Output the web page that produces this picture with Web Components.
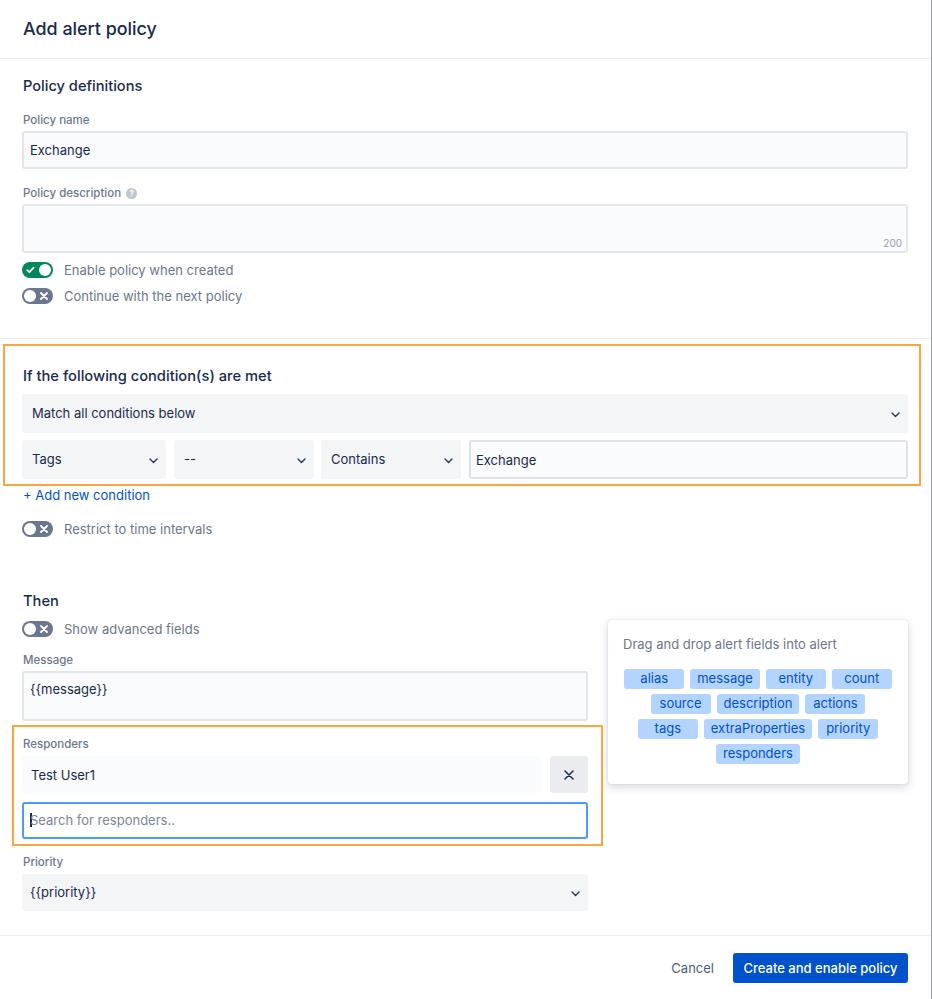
<!DOCTYPE html>
<html>
<head>
<meta charset="utf-8">
<title>Add alert policy</title>
<style>
  html, body { margin: 0; padding: 0; background: #fff; }
  body { font-family: Inter, "Liberation Sans", sans-serif; color: #172b4d; }
</style>
</head>
<body>
<policy-page>
  <page-header slot="header">Add alert policy</page-header>

  <form-section slot="first" title="Policy definitions">
    <text-field label="Policy name" value="Exchange"></text-field>
    <text-field label="Policy description" help height="49" counter="200"></text-field>
    <toggle-row checked>Enable policy when created</toggle-row>
    <toggle-row>Continue with the next policy</toggle-row>
  </form-section>

  <condition-block slot="conditions"></condition-block>

  <then-block slot="then"></then-block>

  <page-footer slot="footer"></page-footer>
</policy-page>

<script>
  const CHEVRON = `<svg width="9" height="6" viewBox="0 0 9 6" fill="none"><path d="M1 1 4.5 4.5 8 1" stroke="#253858" stroke-width="1.4" stroke-linecap="round" stroke-linejoin="round"/></svg>`;

  class PolicyPage extends HTMLElement {
    constructor() {
      super();
      const shadow = this.attachShadow({ mode: 'open' });
      shadow.innerHTML = `
        <style>
          :host { position: relative; display: block; box-sizing: border-box; width: 932px; height: 999px; overflow: hidden; border-right: 1px solid #9a9db0; background: #fff; }
          /* small dark mark sitting on the window edge */
          :host::after { content: ""; position: absolute; right: -1px; top: 229px; width: 1px; height: 6px; background: #4a5a70; }
          .body { padding: 0 23px 0 22px; }
        </style>
        <slot name="header"></slot>
        <slot name="first"></slot>
        <div class="body">
          <slot name="conditions"></slot>
          <slot name="then"></slot>
        </div>
        <slot name="footer"></slot>
      `;
    }
  }

  class PageHeader extends HTMLElement {
    constructor() {
      super();
      const shadow = this.attachShadow({ mode: 'open' });
      shadow.innerHTML = `
        <style>
          :host { display: flex; align-items: center; box-sizing: border-box; height: 59px; padding: 0 23px 2px; border-bottom: 1px solid #ebecf0; font-size: 17.9px; font-weight: 500; color: #172b4d; }
        </style>
        <slot></slot>
      `;
    }
  }

  class FormSection extends HTMLElement {
    constructor() {
      super();
      const shadow = this.attachShadow({ mode: 'open' });
      shadow.innerHTML = `
        <style>
          :host { display: block; box-sizing: border-box; height: 280px; padding: 17px 23px 0 22px; border-bottom: 1px solid #ebecf0; }
          h2 { margin: 0 0 0 1px; font-size: 14.6px; line-height: 20px; font-weight: 500; color: #172b4d; }
          ::slotted(toggle-row:nth-of-type(1)) { margin-top: 9px; }
          ::slotted(toggle-row) { margin-top: 10px; }
        </style>
        <h2></h2>
        <slot></slot>
      `;
      shadow.querySelector('h2').textContent = this.getAttribute('title');
    }
  }

  class TextField extends HTMLElement {
    constructor() {
      super();
      const shadow = this.attachShadow({ mode: 'open' });
      const h = this.getAttribute('height') || 38;
      shadow.innerHTML = `
        <style>
          :host { display: block; margin-top: 16px; }
          .label { display: flex; align-items: center; gap: 5px; margin-bottom: 3px; padding-left: 1px; font-size: 11.5px; line-height: 16px; font-weight: 500; color: #6b778c; }
          .help { display: inline-flex; align-items: center; justify-content: center; width: 11px; height: 11px; border-radius: 50%; background: #c1c7d0; color: #fff; font-size: 8px; line-height: 11px; font-weight: 700; }
          .box { position: relative; box-sizing: border-box; height: ${h}px; padding: 0 6px; border: 2px solid #e4e6ea; border-radius: 3px; background: #fafbfc; font-size: 13px; line-height: 35px; color: #172b4d; }
          .count { position: absolute; right: 4px; bottom: 1px; font-size: 10px; line-height: 14px; color: #97a0af; }
        </style>
        <div class="label"></div>
        <div class="box"></div>
      `;
      const label = shadow.querySelector('.label');
      label.textContent = this.getAttribute('label');
      if (this.hasAttribute('help')) {
        const help = document.createElement('span');
        help.className = 'help';
        help.textContent = '?';
        label.append(help);
      }
      const box = shadow.querySelector('.box');
      box.textContent = this.getAttribute('value') || '';
      if (this.hasAttribute('counter')) {
        const count = document.createElement('span');
        count.className = 'count';
        count.textContent = this.getAttribute('counter');
        box.append(count);
      }
    }
  }

  class ToggleRow extends HTMLElement {
    constructor() {
      super();
      const shadow = this.attachShadow({ mode: 'open' });
      const on = this.hasAttribute('checked');
      shadow.innerHTML = `
        <style>
          :host { display: flex; align-items: center; gap: 11px; height: 16px; font-size: 13px; color: #6b778c; }
          .track { position: relative; flex: none; width: 31px; height: 16px; border-radius: 8px; background: ${on ? '#00875a' : '#6b778c'}; }
          .knob { position: absolute; top: 2px; ${on ? 'right: 2px' : 'left: 2px'}; width: 12px; height: 12px; border-radius: 50%; background: #fff; }
          svg { position: absolute; top: 4px; ${on ? 'left: 4px' : 'right: 5px'}; }
        </style>
        <span class="track">
          <span class="knob"></span>
          ${on
            ? '<svg width="9" height="8" viewBox="0 0 9 8" fill="none"><path d="M1.2 4.2 3.4 6.2 7.6 1.6" stroke="#fff" stroke-width="1.8" stroke-linecap="round" stroke-linejoin="round"/></svg>'
            : '<svg width="8" height="8" viewBox="0 0 8 8" fill="none"><path d="M1 1 7 7M7 1 1 7" stroke="#fff" stroke-width="1.8" stroke-linecap="round"/></svg>'}
        </span>
        <slot></slot>
      `;
    }
  }

  class SelectBox extends HTMLElement {
    constructor() {
      super();
      const shadow = this.attachShadow({ mode: 'open' });
      shadow.innerHTML = `
        <style>
          :host { display: flex; align-items: center; justify-content: space-between; box-sizing: border-box; height: var(--select-h, 39px); padding: 0 8px 2px var(--select-pad, 10px); border-radius: 3px; background: #f4f5f7; font-size: 13px; color: #172b4d; }
          svg { display: block; margin: 4px 0 0; }
        </style>
        <slot></slot>
        ${CHEVRON}
      `;
    }
  }

  class HighlightFrame extends HTMLElement {
    constructor() {
      super();
      const shadow = this.attachShadow({ mode: 'open' });
      shadow.innerHTML = `
        <style>
          :host { position: absolute; display: block; box-sizing: border-box; border: 2px solid #f9a540; pointer-events: none; }
        </style>
      `;
    }
  }

  class ConditionBlock extends HTMLElement {
    constructor() {
      super();
      const shadow = this.attachShadow({ mode: 'open' });
      shadow.innerHTML = `
        <style>
          :host { display: block; position: relative; padding-top: 27px; }
          h2 { margin: 0 0 8px 1px; font-size: 14.7px; line-height: 20px; font-weight: 500; color: #172b4d; }
          .row { display: flex; margin-top: 7px; }
          .row select-box:nth-child(1) { width: 144px; margin-right: 8px; }
          .row select-box:nth-child(2) { width: 140px; margin-right: 7px; }
          .row select-box:nth-child(3) { width: 140px; margin-right: 8px; }
          .value { flex: 1; box-sizing: border-box; height: 39px; padding: 0 5px; border: 2px solid #dfe1e6; border-radius: 3px; background: #fafbfc; font-size: 13px; line-height: 36px; color: #172b4d; }
          a { display: block; margin: 6px 0 16px 1px; font-size: 13px; line-height: 20px; color: #0052cc; text-decoration: none; }
          highlight-frame { left: -19px; top: 5px; width: 918px; height: 142px; }
        </style>
        <h2>If the following condition(s) are met</h2>
        <select-box>Match all conditions below</select-box>
        <div class="row">
          <select-box>Tags</select-box>
          <select-box>--</select-box>
          <select-box>Contains</select-box>
          <div class="value">Exchange</div>
        </div>
        <a href="#">+ Add new condition</a>
        <toggle-row>Restrict to time intervals</toggle-row>
        <highlight-frame></highlight-frame>
      `;
    }
  }

  class ThenBlock extends HTMLElement {
    constructor() {
      super();
      const shadow = this.attachShadow({ mode: 'open' });
      shadow.innerHTML = `
        <style>
          :host { display: flex; justify-content: space-between; align-items: flex-start; margin-top: 54px; }
          .left { position: relative; width: 566px; }
          h2 { margin: 0 0 10px 1px; font-size: 14.7px; line-height: 20px; font-weight: 500; color: #172b4d; }
          .message { margin-bottom: 15px; }
          .message .lbl { margin-top: 15px; }
          .lbl { margin-bottom: 3px; padding-left: 1px; font-size: 11.5px; line-height: 16px; font-weight: 500; color: #6b778c; }
          .resp-lbl { margin-bottom: 4px; }
          .msgbox { box-sizing: border-box; height: 50px; padding: 6px 6px; border: 2px solid #e4e6ea; border-radius: 3px; background: #fafbfc; font-size: 13px; line-height: 20px; color: #172b4d; }
          .resp { display: flex; gap: 9px; margin-bottom: 9px; }
          .user { flex: 1; display: flex; align-items: center; height: 37px; padding: 0 9px; border-radius: 3px; background: #fafbfc; font-size: 13px; color: #172b4d; }
          .clear { display: flex; align-items: center; justify-content: center; width: 38px; height: 37px; border-radius: 3px; background: #ebecf0; }
          .search { display: flex; align-items: center; box-sizing: border-box; height: 37px; padding: 0 6px 1px; border: 2px solid #4c9aff; border-radius: 3px; background: #fff; font-size: 13px; color: #7a869a; }
          .caret { width: 1.5px; height: 14px; margin-right: -1.5px; background: #172b4d; }
          .prio-lbl { margin: 15px 0 4px; }
          select-box { --select-h: 37px; --select-pad: 8px; }
          highlight-frame { left: -10px; top: 134px; width: 591px; height: 121px; }
        </style>
        <div class="left">
          <h2>Then</h2>
          <toggle-row>Show advanced fields</toggle-row>
          <div class="message">
            <div class="lbl">Message</div>
            <div class="msgbox">{{message}}</div>
          </div>
          <div class="lbl resp-lbl">Responders</div>
          <div class="resp">
            <div class="user">Test User1</div>
            <div class="clear"><svg width="10" height="10" viewBox="0 0 10 10" fill="none"><path d="M1 1 9 9M9 1 1 9" stroke="#172b4d" stroke-width="1.5" stroke-linecap="round"/></svg></div>
          </div>
          <div class="search"><span class="caret"></span>Search for responders..</div>
          <div class="lbl prio-lbl">Priority</div>
          <select-box>{{priority}}</select-box>
          <highlight-frame></highlight-frame>
        </div>
        <fields-card></fields-card>
      `;
    }
  }

  class FieldTag extends HTMLElement {
    constructor() {
      super();
      const shadow = this.attachShadow({ mode: 'open' });
      shadow.innerHTML = `
        <style>
          :host { display: block; box-sizing: border-box; min-width: 60px; height: 19.5px; padding: 0 7px; border-radius: 3px; background: #b3d4ff; font-size: 13px; line-height: 19.5px; text-align: center; color: #0052cc; }
        </style>
        <slot></slot>
      `;
    }
  }

  class FieldsCard extends HTMLElement {
    constructor() {
      super();
      const shadow = this.attachShadow({ mode: 'open' });
      const fields = ['alias', 'message', 'entity', 'count', 'source', 'description', 'actions', 'tags', 'extraProperties', 'priority', 'responders'];
      shadow.innerHTML = `
        <style>
          :host { display: block; box-sizing: border-box; width: 300px; height: 164px; margin-top: 29px; padding: 16px 14px; border-radius: 3px; background: #fff; box-shadow: 0 3px 10px rgba(9, 30, 66, .18), 0 0 1px rgba(9, 30, 66, .25); }
          p { margin: 0 1px 16px; font-size: 13px; line-height: 17px; color: #6b778c; }
          .tags { display: flex; flex-wrap: wrap; justify-content: center; gap: 5.5px 6px; }
        </style>
        <p>Drag and drop alert fields into alert</p>
        <div class="tags">${fields.map(f => `<field-tag>${f}</field-tag>`).join('')}</div>
      `;
    }
  }

  class PageFooter extends HTMLElement {
    constructor() {
      super();
      const shadow = this.attachShadow({ mode: 'open' });
      shadow.innerHTML = `
        <style>
          :host { display: flex; justify-content: flex-end; align-items: flex-start; gap: 19px; box-sizing: border-box; height: 64px; margin-top: 24px; padding: 17px 23px 0 0; border-top: 1px solid #ebecf0; font-size: 13px; line-height: 30px; }
          .cancel { color: #505f79; }
          .create { width: 175px; height: 30px; border-radius: 3px; background: #0052cc; color: #fff; font-weight: 500; text-align: center; }
        </style>
        <span class="cancel">Cancel</span>
        <span class="create">Create and enable policy</span>
      `;
    }
  }

  customElements.define('policy-page', PolicyPage);
  customElements.define('page-header', PageHeader);
  customElements.define('form-section', FormSection);
  customElements.define('text-field', TextField);
  customElements.define('toggle-row', ToggleRow);
  customElements.define('select-box', SelectBox);
  customElements.define('highlight-frame', HighlightFrame);
  customElements.define('condition-block', ConditionBlock);
  customElements.define('field-tag', FieldTag);
  customElements.define('fields-card', FieldsCard);
  customElements.define('then-block', ThenBlock);
  customElements.define('page-footer', PageFooter);
</script>
</body>
</html>
